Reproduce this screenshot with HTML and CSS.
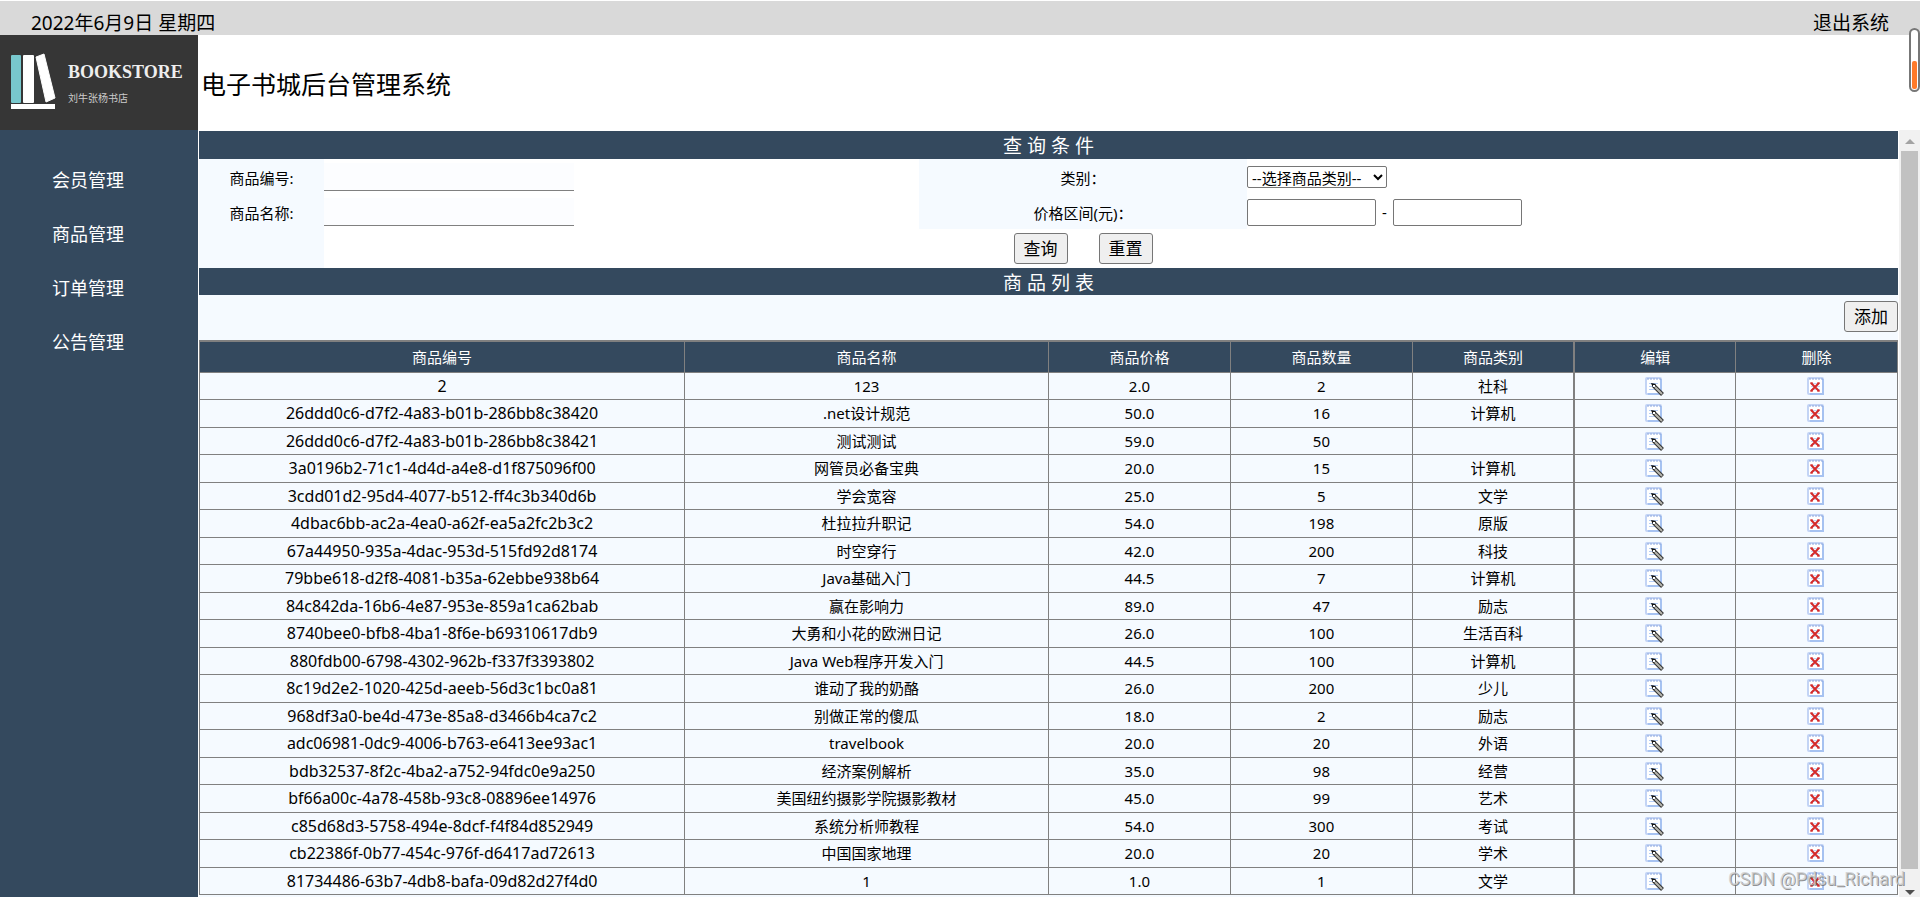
FILE: index.html
```html
<!DOCTYPE html>
<html lang="zh-CN">
<head>
<meta charset="utf-8">
<title>电子书城后台管理系统</title>
<link rel="stylesheet" href="styles.css">
</head>
<body>
<svg class="sprite" aria-hidden="true">
  <symbol id="edit" viewBox="0 0 20 20">
    <rect x="1" y="1" width="15" height="16" rx="1" fill="#fff" stroke="#c3d4f5" stroke-width="2"/>
    <path d="M16 2v15H3" fill="none" stroke="#a6c2f1" stroke-width="2"/>
    <path d="M3 1v2M6 1v2M9 1v2M12 1v2M15 1v2" stroke="#8ba6de"/>
    <path d="M4 6.500h9M4 9.500h8M4 12.500h8" stroke="#b4cdf5"/>
    <path d="M9 9l8.500 8.500" stroke="#333" stroke-width="4"/>
    <path d="M10 10l7 7" stroke="#b8b8b0" stroke-width="2"/>
    <path d="M6 6l5 1-3 4z" fill="#111"/>
    <rect x="8" y="8" width="2" height="2" fill="#fff"/>
  </symbol>
  <symbol id="delete" viewBox="0 0 20 20">
    <rect x="1" y="1" width="15" height="16" rx="1" fill="#fff" stroke="#c3d4f5" stroke-width="2"/>
    <path d="M16 2v15H3" fill="none" stroke="#a6c2f1" stroke-width="2"/>
    <path d="M3 1v2M6 1v2M9 1v2M12 1v2M15 1v2" stroke="#8ba6de"/>
    <path d="M4 6.500h9M4 9.500h9M4 12.500h9" stroke="#c3d6f7"/>
    <path d="M4 6l8 8M12 6l-8 8" stroke="#d42a2a" stroke-width="2"/>
    <path d="M3 6h3M10 6h3M3 14h3M10 14h3" stroke="#d42a2a"/>
  </symbol>
</svg>

<div class="topbar">
  <span>2022年6月9日 星期四</span>
  <a href="#logout">退出系统</a>
</div>

<header class="header">
  <div class="logo">
    <svg class="logo-mark" viewBox="0 0 46 58" aria-hidden="true">
      <rect x="1" y="2" width="10" height="48" rx="1" fill="#78c8cd"/>
      <rect x="13" y="2" width="11" height="48" rx="1" fill="#fff"/>
      <path d="M26 4L34 1L45 45L36 49Z" fill="#fff" stroke="#fff" stroke-linejoin="round"/>
      <rect x="1" y="51" width="44" height="5" fill="#fff"/>
    </svg>
    <div class="logo-text">
      <span class="logo-name">BOOKSTORE</span>
      <span class="logo-sub">刘牛张杨书店</span>
    </div>
  </div>
  <h1 class="title">电子书城后台管理系统</h1>
</header>

<div class="body">
  <nav class="sidebar">
    <a href="#members">会员管理</a>
    <a href="#products">商品管理</a>
    <a href="#orders">订单管理</a>
    <a href="#notices">公告管理</a>
  </nav>

  <main class="main">
    <h2 class="section-title">查 询 条 件</h2>
    <form class="search">
      <label class="label" for="pid">商品编号:</label>
      <div class="field"><input class="line-input" id="pid" type="text"></div>
      <label class="label" for="category">类别：</label>
      <div class="field">
        <select class="select" id="category"><option>--选择商品类别--</option></select>
      </div>
      <label class="label" for="pname">商品名称:</label>
      <div class="field"><input class="line-input" id="pname" type="text"></div>
      <label class="label" for="minprice">价格区间(元)：</label>
      <div class="field range">
        <input class="price-input" id="minprice" type="text">
        <span>-</span>
        <input class="price-input" type="text" aria-label="最高价格">
      </div>
      <div class="label"></div>
      <div></div>
      <div class="actions">
        <button class="button" type="submit">查询</button>
        <button class="button" type="reset">重置</button>
      </div>
      <div></div>
    </form>
    <h2 class="section-title list-title">商 品 列 表</h2>
    <div class="toolbar"><button class="button" type="button">添加</button></div>
    <table class="products">
      <colgroup><col class="c-id"><col class="c-name"><col class="c-num"><col class="c-num"><col class="c-small"><col class="c-small"><col class="c-small"></colgroup>
      <thead>
        <tr><th>商品编号</th><th>商品名称</th><th>商品价格</th><th>商品数量</th><th>商品类别</th><th>编辑</th><th>删除</th></tr>
      </thead>
      <tbody>
        <tr><td>2</td><td>123</td><td>2.0</td><td>2</td><td>社科</td><td><a href="#edit" aria-label="编辑"><svg class="icon"><use href="#edit"/></svg></a></td><td><a href="#delete" aria-label="删除"><svg class="icon"><use href="#delete"/></svg></a></td></tr>
        <tr><td>26ddd0c6-d7f2-4a83-b01b-286bb8c38420</td><td>.net设计规范</td><td>50.0</td><td>16</td><td>计算机</td><td><a href="#edit" aria-label="编辑"><svg class="icon"><use href="#edit"/></svg></a></td><td><a href="#delete" aria-label="删除"><svg class="icon"><use href="#delete"/></svg></a></td></tr>
        <tr><td>26ddd0c6-d7f2-4a83-b01b-286bb8c38421</td><td>测试测试</td><td>59.0</td><td>50</td><td></td><td><a href="#edit" aria-label="编辑"><svg class="icon"><use href="#edit"/></svg></a></td><td><a href="#delete" aria-label="删除"><svg class="icon"><use href="#delete"/></svg></a></td></tr>
        <tr><td>3a0196b2-71c1-4d4d-a4e8-d1f875096f00</td><td>网管员必备宝典</td><td>20.0</td><td>15</td><td>计算机</td><td><a href="#edit" aria-label="编辑"><svg class="icon"><use href="#edit"/></svg></a></td><td><a href="#delete" aria-label="删除"><svg class="icon"><use href="#delete"/></svg></a></td></tr>
        <tr><td>3cdd01d2-95d4-4077-b512-ff4c3b340d6b</td><td>学会宽容</td><td>25.0</td><td>5</td><td>文学</td><td><a href="#edit" aria-label="编辑"><svg class="icon"><use href="#edit"/></svg></a></td><td><a href="#delete" aria-label="删除"><svg class="icon"><use href="#delete"/></svg></a></td></tr>
        <tr><td>4dbac6bb-ac2a-4ea0-a62f-ea5a2fc2b3c2</td><td>杜拉拉升职记</td><td>54.0</td><td>198</td><td>原版</td><td><a href="#edit" aria-label="编辑"><svg class="icon"><use href="#edit"/></svg></a></td><td><a href="#delete" aria-label="删除"><svg class="icon"><use href="#delete"/></svg></a></td></tr>
        <tr><td>67a44950-935a-4dac-953d-515fd92d8174</td><td>时空穿行</td><td>42.0</td><td>200</td><td>科技</td><td><a href="#edit" aria-label="编辑"><svg class="icon"><use href="#edit"/></svg></a></td><td><a href="#delete" aria-label="删除"><svg class="icon"><use href="#delete"/></svg></a></td></tr>
        <tr><td>79bbe618-d2f8-4081-b35a-62ebbe938b64</td><td>Java基础入门</td><td>44.5</td><td>7</td><td>计算机</td><td><a href="#edit" aria-label="编辑"><svg class="icon"><use href="#edit"/></svg></a></td><td><a href="#delete" aria-label="删除"><svg class="icon"><use href="#delete"/></svg></a></td></tr>
        <tr><td>84c842da-16b6-4e87-953e-859a1ca62bab</td><td>赢在影响力</td><td>89.0</td><td>47</td><td>励志</td><td><a href="#edit" aria-label="编辑"><svg class="icon"><use href="#edit"/></svg></a></td><td><a href="#delete" aria-label="删除"><svg class="icon"><use href="#delete"/></svg></a></td></tr>
        <tr><td>8740bee0-bfb8-4ba1-8f6e-b69310617db9</td><td>大勇和小花的欧洲日记</td><td>26.0</td><td>100</td><td>生活百科</td><td><a href="#edit" aria-label="编辑"><svg class="icon"><use href="#edit"/></svg></a></td><td><a href="#delete" aria-label="删除"><svg class="icon"><use href="#delete"/></svg></a></td></tr>
        <tr><td>880fdb00-6798-4302-962b-f337f3393802</td><td>Java Web程序开发入门</td><td>44.5</td><td>100</td><td>计算机</td><td><a href="#edit" aria-label="编辑"><svg class="icon"><use href="#edit"/></svg></a></td><td><a href="#delete" aria-label="删除"><svg class="icon"><use href="#delete"/></svg></a></td></tr>
        <tr><td>8c19d2e2-1020-425d-aeeb-56d3c1bc0a81</td><td>谁动了我的奶酪</td><td>26.0</td><td>200</td><td>少儿</td><td><a href="#edit" aria-label="编辑"><svg class="icon"><use href="#edit"/></svg></a></td><td><a href="#delete" aria-label="删除"><svg class="icon"><use href="#delete"/></svg></a></td></tr>
        <tr><td>968df3a0-be4d-473e-85a8-d3466b4ca7c2</td><td>别做正常的傻瓜</td><td>18.0</td><td>2</td><td>励志</td><td><a href="#edit" aria-label="编辑"><svg class="icon"><use href="#edit"/></svg></a></td><td><a href="#delete" aria-label="删除"><svg class="icon"><use href="#delete"/></svg></a></td></tr>
        <tr><td>adc06981-0dc9-4006-b763-e6413ee93ac1</td><td>travelbook</td><td>20.0</td><td>20</td><td>外语</td><td><a href="#edit" aria-label="编辑"><svg class="icon"><use href="#edit"/></svg></a></td><td><a href="#delete" aria-label="删除"><svg class="icon"><use href="#delete"/></svg></a></td></tr>
        <tr><td>bdb32537-8f2c-4ba2-a752-94fdc0e9a250</td><td>经济案例解析</td><td>35.0</td><td>98</td><td>经营</td><td><a href="#edit" aria-label="编辑"><svg class="icon"><use href="#edit"/></svg></a></td><td><a href="#delete" aria-label="删除"><svg class="icon"><use href="#delete"/></svg></a></td></tr>
        <tr><td>bf66a00c-4a78-458b-93c8-08896ee14976</td><td>美国纽约摄影学院摄影教材</td><td>45.0</td><td>99</td><td>艺术</td><td><a href="#edit" aria-label="编辑"><svg class="icon"><use href="#edit"/></svg></a></td><td><a href="#delete" aria-label="删除"><svg class="icon"><use href="#delete"/></svg></a></td></tr>
        <tr><td>c85d68d3-5758-494e-8dcf-f4f84d852949</td><td>系统分析师教程</td><td>54.0</td><td>300</td><td>考试</td><td><a href="#edit" aria-label="编辑"><svg class="icon"><use href="#edit"/></svg></a></td><td><a href="#delete" aria-label="删除"><svg class="icon"><use href="#delete"/></svg></a></td></tr>
        <tr><td>cb22386f-0b77-454c-976f-d6417ad72613</td><td>中国国家地理</td><td>20.0</td><td>20</td><td>学术</td><td><a href="#edit" aria-label="编辑"><svg class="icon"><use href="#edit"/></svg></a></td><td><a href="#delete" aria-label="删除"><svg class="icon"><use href="#delete"/></svg></a></td></tr>
        <tr><td>81734486-63b7-4db8-bafa-09d82d27f4d0</td><td>1</td><td>1.0</td><td>1</td><td>文学</td><td><a href="#edit" aria-label="编辑"><svg class="icon"><use href="#edit"/></svg></a></td><td><a href="#delete" aria-label="删除"><svg class="icon"><use href="#delete"/></svg></a></td></tr>
      </tbody>
    </table>
  </main>

  <div class="scrollbar" aria-hidden="true">
    <div class="scroll-up"></div>
    <div class="scroll-thumb"></div>
    <div class="scroll-down"></div>
  </div>
</div>

<div class="meter" aria-hidden="true"><div class="meter-fill"></div></div>
<div class="watermark">CSDN @Pdsu_Richard</div>
</body>
</html>
```
FILE: styles.css
```css
* { box-sizing: border-box; }

body {
  position: relative;
  display: flex;
  flex-direction: column;
  height: 100vh;
  margin: 0;
  overflow: hidden;
  background: #fff;
  color: #000;
  font-family: "Noto Sans", "Noto Sans CJK SC", sans-serif;
  font-size: 15px;
}

a { color: inherit; text-decoration: none; }
h1, h2 { margin: 0; font-weight: 400; }
input, select, button { font-family: inherit; color: #000; }

.sprite { position: absolute; width: 0; height: 0; }

.topbar {
  display: flex;
  flex: none;
  justify-content: space-between;
  height: 35px;
  padding: 9px 31px 0;
  border-top: 1px solid #fff;
  background: #d9d9d9;
  font-size: 19px;
  line-height: 26px;
}

.header { display: flex; flex: none; height: 95px; }

.logo {
  display: flex;
  flex: none;
  width: 198px;
  padding: 18px 0 0 10px;
  background: #363636;
  color: #eee;
}
.logo-mark { flex: none; width: 46px; height: 58px; }
.logo-text { display: flex; flex-direction: column; padding: 8px 0 0 12px; }
.logo-name {
  font-family: "Liberation Serif", serif;
  font-size: 18px;
  font-weight: 700;
  line-height: 22px;
}
.logo-sub {
  padding-top: 7px;
  color: #ccc;
  font-family: "Noto Sans CJK SC", sans-serif;
  font-size: 10px;
  line-height: 16px;
}

.title { padding-left: 3px; font-size: 25px; line-height: 98px; }

.body { display: flex; flex: 1; min-height: 0; }

.sidebar {
  display: flex;
  flex: none;
  flex-direction: column;
  width: 198px;
  padding: 23px 0 0 52px;
  background: #34495e;
  color: #fff;
  font-size: 18px;
  line-height: 54px;
}

.main {
  flex: 1;
  min-width: 0;
  padding: 1px 1px 0;
  overflow: hidden;
  background: #f5faff;
  background-clip: content-box;
}

.section-title {
  height: 28px;
  background: #34495e;
  color: #fff;
  font-size: 19px;
  line-height: 31px;
  text-align: center;
}
.list-title { height: 27px; }

.search {
  display: grid;
  grid-template-columns: 125fr 595fr 328fr 651fr;
  grid-template-rows: 36px 34px 39px;
  background: #fff;
}
.label {
  display: flex;
  align-items: center;
  justify-content: center;
  background: #f5faff;
}
.field { display: flex; align-items: center; }
.line-input {
  width: 250px;
  height: 28px;
  border: 0;
  border-bottom: 1px solid #808080;
  background: #fcfdff;
}
.select {
  width: 140px;
  height: 22px;
  padding: 0;
  border: 1px solid #767676;
  border-radius: 2px;
  background: #fff;
  font-size: 15px;
  line-height: 20px;
}
.range { gap: 6px; }
.price-input {
  width: 129px;
  height: 27px;
  border: 1px solid #767676;
  border-radius: 2px;
}
.actions {
  display: flex;
  align-items: center;
  justify-content: center;
  gap: 31px;
}
.button {
  width: 54px;
  height: 31px;
  padding: 0;
  border: 1px solid #767676;
  border-radius: 3px;
  background: #efefef;
  font-size: 17px;
  line-height: 28px;
}

.toolbar {
  display: flex;
  justify-content: flex-end;
  height: 45px;
  padding-top: 6px;
}

.products {
  width: 100%;
  border-collapse: collapse;
  border: 1px solid #808080;
  border-top-width: 2px;
  table-layout: fixed;
  text-align: center;
}
.c-id { width: 24%; }
.c-name { width: 18%; }
.c-num { width: 9%; }
.c-small { width: 8%; }
.products th {
  height: 31px;
  padding: 0;
  border: 1px solid #808080;
  background: #34495e;
  color: #fff;
  font-weight: 400;
  line-height: 24px;
}
.products td {
  padding: 0;
  border: 1px solid #808080;
  line-height: 24px;
}
.products td:first-child { font-size: 16px; }
.products th:nth-child(6), .products td:nth-child(6) { border-left-width: 2px; }
.products tbody tr { height: 27px; }
.products tbody tr:nth-child(even) { height: 28px; }
.icon { display: block; width: 20px; height: 22px; margin: 0 auto; padding-top: 2px; }

.scrollbar {
  display: flex;
  flex: none;
  flex-direction: column;
  align-items: center;
  width: 21px;
  background: #f1f1f1;
}
.scroll-up, .scroll-down { flex: none; width: 17px; }
.scroll-up { height: 21px; padding: 9px 4px 0; }
.scroll-down { height: 28px; padding: 21px 4px 0; }
.scroll-up::before, .scroll-down::before {
  content: "";
  display: block;
  border: 5px solid transparent;
}
.scroll-up::before { border-top: 0; border-bottom-color: #a3a3a3; }
.scroll-down::before { border-bottom: 0; border-top-color: #505050; }
.scroll-thumb { flex: 1; width: 17px; background: #c1c1c1; }

.meter {
  position: absolute;
  top: 28px;
  right: 0;
  display: flex;
  align-items: flex-end;
  width: 11px;
  height: 64px;
  padding: 1px;
  border: 2px solid #777;
  border-radius: 6px;
  background: #fff;
}
.meter-fill { width: 100%; height: 28px; border-radius: 2px; background: #ff7a2a; }

.watermark {
  position: absolute;
  right: 15px;
  bottom: 8px;
  color: rgba(205, 205, 205, 0.8);
  font-family: Roboto, "Liberation Sans", sans-serif;
  font-size: 18px;
  line-height: 20px;
  text-shadow: 1px 1px 0 rgba(100, 100, 100, 0.7);
}
```
